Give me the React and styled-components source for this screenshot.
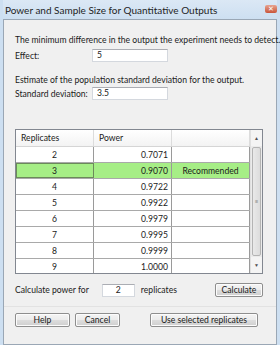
import React from "react";
import styled, { createGlobalStyle } from "styled-components";

const FONT = `Lato, "Open Sans", "Liberation Sans", sans-serif`;

const Global = createGlobalStyle`
  html, body {
    margin: 0;
    padding: 0;
    background: #ffffff;
  }
  body {
    font-family: ${FONT};
    font-size: 8.6px;
    color: #1a1a1a;
  }
`;

const Window = styled.div`
  width: 280px;
  height: 345px;
  box-sizing: border-box;
  display: flex;
  flex-direction: column;
  background: #cddff1;
  padding: 0 3px;
  overflow: hidden;
`;

const TitleBar = styled.div`
  height: 19px;
  display: flex;
  align-items: center;
  justify-content: space-between;
  padding-left: 2px;
  font-size: 10px;
  color: #1e1e1e;
  white-space: nowrap;
  background: linear-gradient(#dbe8f5, #cddff1);
`;

const CloseBox = styled.div`
  width: 12px;
  height: 8px;
  margin-top: -2px;
  border-radius: 2px;
  background: linear-gradient(#e7a38f, #c9553a);
  display: flex;
  align-items: center;
  justify-content: center;
  color: #fff;
  font-size: 7px;
  line-height: 1;
`;

const Panel = styled.div`
  flex: 1;
  display: flex;
  flex-direction: column;
  background: #f0f0f0;
  border: 1px solid #9aa7b5;
  padding: 14px 0 0 11px;
  white-space: nowrap;
`;

const Para = styled.div`
  height: 13px;
  line-height: 13px;
  margin-top: ${(p) => p.$top || 0}px;
`;

const FieldRow = styled.div`
  display: grid;
  grid-template-columns: 77px 76px;
  align-items: center;
  height: 13px;
  margin-top: ${(p) => p.$top || 0}px;
`;

const TextBox = styled.div`
  height: 13px;
  box-sizing: border-box;
  background: #fff;
  border: 1px solid #d4d8de;
  border-top-color: #abadb3;
  padding-left: 4px;
  line-height: 11px;
  text-align: ${(p) => p.$align || "left"};
`;

const TableBox = styled.div`
  margin-top: 29px;
  width: 248px;
  height: 145px;
  box-sizing: border-box;
  border: 1px solid #828790;
  background: #fff;
  display: flex;
  overflow: hidden;
`;

const Grid = styled.div`
  flex: 1;
  display: flex;
  flex-direction: column;
`;

const Row = styled.div`
  display: grid;
  grid-template-columns: 78px 78px 1fr;
  height: ${(p) => (p.$head ? 17 : 16)}px;
  flex-shrink: 0;
  background: ${(p) =>
    p.$head
      ? "linear-gradient(#ffffff, #f3f3f3)"
      : p.$rec
      ? "#a6ee86"
      : "#ffffff"};
  border-bottom: 1px solid ${(p) => (p.$head ? "#d5d5d5" : "#a9a9a9")};
  box-sizing: border-box;
`;

const Cell = styled.div`
  display: flex;
  align-items: center;
  justify-content: ${(p) =>
    p.$align === "right" ? "flex-end" : p.$align === "left" ? "flex-start" : "center"};
  padding: 0 ${(p) => (p.$align === "right" ? 3 : 5)}px 0 5px;
  border-right: 1px solid ${(p) => (p.$head ? "#dcdcdc" : "#9a9a9a")};
  box-sizing: border-box;
  outline: ${(p) => (p.$sel ? "1px solid #6b8a5a" : "none")};
  outline-offset: -1px;
`;

const ScrollBar = styled.div`
  width: 11px;
  display: flex;
  flex-direction: column;
  background: #ebebeb;
  border-left: 1px solid #e0e0e0;
`;

const ScrollBtn = styled.div`
  height: 16px;
  display: flex;
  align-items: center;
  justify-content: center;
  background: #f4f4f4;
  color: #505050;
  font-size: 5px;
`;

const Thumb = styled.div`
  height: 108px;
  margin: 1px 1px;
  border: 1px solid #b4b4b4;
  border-radius: 2px;
  background: linear-gradient(90deg, #e9e9e9, #dcdcdc);
  display: flex;
  align-items: center;
  justify-content: center;
  color: #8a8a8a;
  font-size: 6px;
`;

const CalcRow = styled.div`
  margin-top: 9px;
  display: flex;
  align-items: center;
  height: 14px;
  width: 248px;
`;

const SmallBox = styled(TextBox)`
  width: 33px;
  margin: 0 6px 0 13px;
  padding: 0;
`;

const Button = styled.button`
  font-family: ${FONT};
  font-size: 8.6px;
  color: #1a1a1a;
  height: 14px;
  width: ${(p) => p.$w}px;
  padding: 0;
  box-sizing: border-box;
  border: 1px solid #8e8e8e;
  border-radius: 2px;
  background: linear-gradient(#f4f4f4 0%, #ebebeb 50%, #dddddd 51%, #cfcfcf 100%);
  box-shadow: inset 0 0 0 1px #fcfcfc;
  margin-left: ${(p) => p.$ml || 0}px;
`;

const Footer = styled.div`
  margin-top: 9px;
  margin-left: -11px;
  padding: 6px 0 0 11px;
  border-top: 1px solid #e2e2e2;
  display: flex;
  align-items: center;
`;

const rows = [
  [2, "0.7071", ""],
  [3, "0.9070", "Recommended"],
  [4, "0.9722", ""],
  [5, "0.9922", ""],
  [6, "0.9979", ""],
  [7, "0.9995", ""],
  [8, "0.9999", ""],
  [9, "1.0000", ""],
];

export default function App() {
  return (
    <>
      <Global />
      <Window>
        <TitleBar>
          <span>Power and Sample Size for Quantitative Outputs</span>
          <CloseBox>✕</CloseBox>
        </TitleBar>
        <Panel>
          <Para>The minimum difference in the output the experiment needs to detect.</Para>
          <FieldRow $top={2}>
            <span>Effect:</span>
            <TextBox>5</TextBox>
          </FieldRow>
          <Para $top={12}>Estimate of the population standard deviation for the output.</Para>
          <FieldRow>
            <span>Standard deviation:</span>
            <TextBox>3.5</TextBox>
          </FieldRow>
          <TableBox>
            <Grid>
              <Row $head>
                <Cell $head $align="left">Replicates</Cell>
                <Cell $head $align="left">Power</Cell>
                <Cell $head />
              </Row>
              {rows.map(([n, p, note]) => (
                <Row key={n} $rec={!!note}>
                  <Cell $sel={!!note}>{n}</Cell>
                  <Cell $align="right">{p}</Cell>
                  <Cell>{note}</Cell>
                </Row>
              ))}
            </Grid>
            <ScrollBar>
              <ScrollBtn>▲</ScrollBtn>
              <Thumb>≡</Thumb>
              <ScrollBtn>▼</ScrollBtn>
            </ScrollBar>
          </TableBox>
          <CalcRow>
            <span>Calculate power for</span>
            <SmallBox $align="center">2</SmallBox>
            <span>replicates</span>
            <Button $w={48} style={{ marginLeft: "auto" }}>Calculate</Button>
          </CalcRow>
          <Footer>
            <Button $w={55}>Help</Button>
            <Button $w={45} $ml={5}>Cancel</Button>
            <Button $w={108} $ml={30}>Use selected replicates</Button>
          </Footer>
        </Panel>
      </Window>
    </>
  );
}
